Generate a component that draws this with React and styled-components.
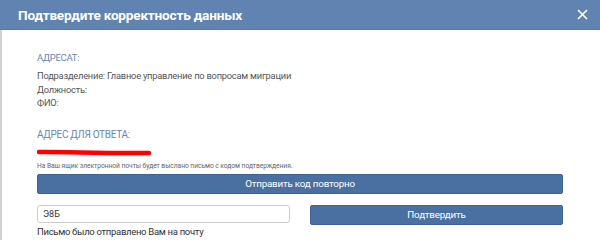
import React from 'react'
import styled, { createGlobalStyle } from 'styled-components'

const GlobalStyle = createGlobalStyle`
  html, body {
    margin: 0;
    padding: 0;
    background: #ffffff;
  }
  body {
    font-family: Roboto, "Open Sans", "Liberation Sans", sans-serif;
  }
`

const Modal = styled.div`
  width: 600px;
  height: 240px;
  overflow: hidden;
  background: #ffffff;
`

const Header = styled.div`
  height: 29px;
  display: flex;
  align-items: center;
  justify-content: space-between;
  padding: 0 12px 0 18px;
  background: #6083b1;
  border-bottom: 1px solid #587aa8;
`

const Title = styled.h1`
  margin: 0;
  font-size: 13.6px;
  font-weight: 700;
  letter-spacing: -0.2px;
  color: #ffffff;
`

const Close = styled.button`
  display: flex;
  padding: 0;
  border: 0;
  background: none;
  cursor: pointer;
`

const Body = styled.div`
  border-left: 2px solid #d2d2d2;
  height: 210px;
  padding: 22px 37px 0 35px;
  box-sizing: border-box;
`

const Label = styled.div`
  font-size: ${p => p.$size || 9.5}px;
  line-height: 12px;
  letter-spacing: -0.3px;
  color: #6a86b3;
  margin-bottom: ${p => p.$gap || 5}px;
`

const Line = styled.div`
  font-size: 9.3px;
  line-height: 13.5px;
  letter-spacing: -0.22px;
  color: #555555;
`

const Section = styled.div`
  margin-bottom: 19px;
`

const Redacted = styled.div`
  height: 13px;
  width: 120px;
  margin-bottom: 6px;
`

const Hint = styled.div`
  font-size: 6.7px;
  line-height: 10px;
  letter-spacing: -0.05px;
  color: #666666;
  margin-bottom: 3px;
`

const Button = styled.button`
  display: block;
  width: ${p => p.$width || '100%'};
  height: 20px;
  padding: 0;
  border: 1px solid #3f6394;
  border-radius: 2px;
  background: #4a70a2;
  color: #ffffff;
  font-family: Roboto, "Open Sans", "Liberation Sans", sans-serif;
  font-size: 9.8px;
  letter-spacing: -0.2px;
  cursor: pointer;
`

const Row = styled.div`
  display: flex;
  justify-content: space-between;
  align-items: flex-start;
  margin-top: 11px;
`

const Field = styled.div`
  width: 253px;
`

const Input = styled.input`
  display: block;
  box-sizing: border-box;
  width: 100%;
  height: 18px;
  margin: 0;
  padding: 0 5px;
  border: 1px solid #cccccc;
  border-radius: 3px;
  font-family: Roboto, "Open Sans", "Liberation Sans", sans-serif;
  font-size: 9px;
  color: #333333;
  outline: none;
`

const Note = styled.div`
  font-size: 9.5px;
  line-height: 12px;
  letter-spacing: -0.3px;
  color: #333333;
  margin-top: 3px;
`

export default function App() {
  return (
    <>
      <GlobalStyle />
      <Modal>
        <Header>
          <Title>Подтвердите корректность данных</Title>
          <Close aria-label="Закрыть">
            <svg width="11" height="11" viewBox="0 0 11 11">
              <path d="M1 1L10 10M10 1L1 10" stroke="#ffffff" strokeWidth="1.6" />
            </svg>
          </Close>
        </Header>
        <Body>
          <Section>
            <Label>АДРЕСАТ:</Label>
            <Line>Подразделение: Главное управление по вопросам миграции</Line>
            <Line>Должность:</Line>
            <Line>ФИО:</Line>
          </Section>
          <Label $size={10} $gap={1}>АДРЕС ДЛЯ ОТВЕТА:</Label>
          <Redacted>
            <svg width="120" height="13" viewBox="0 0 120 13">
              <path d="M2 8 C30 7.5, 60 9.5, 112 9" stroke="#ff0000" strokeWidth="4.5" fill="none" strokeLinecap="round" />
            </svg>
          </Redacted>
          <Hint>На Ваш ящик электронной почты будет выслано письмо с кодом подтверждения.</Hint>
          <Button>Отправить код повторно</Button>
          <Row>
            <Field>
              <Input defaultValue="Э8Б" />
              <Note>Письмо было отправлено Вам на почту</Note>
            </Field>
            <Button $width="253px">Подтвердить</Button>
          </Row>
        </Body>
      </Modal>
    </>
  )
}
